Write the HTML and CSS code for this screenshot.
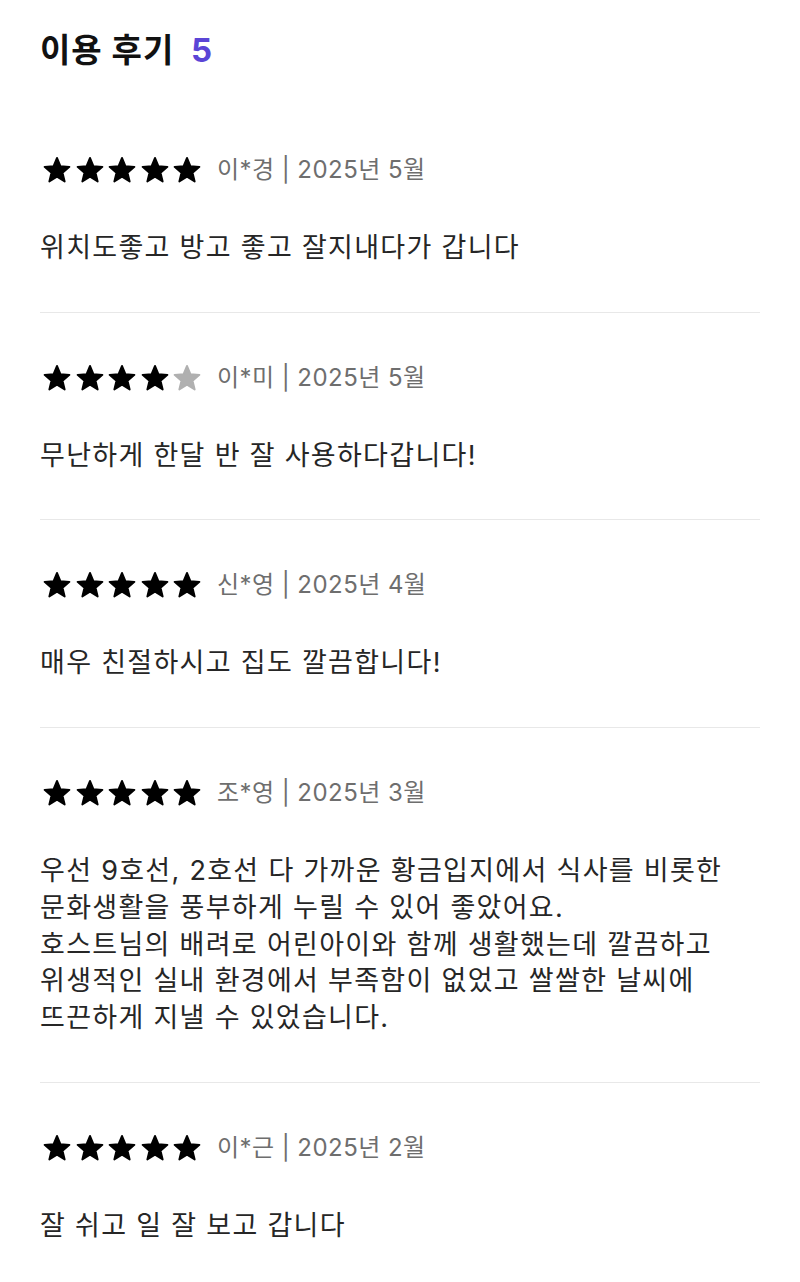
FILE: index.html
```html
<!DOCTYPE html>
<html lang="ko">
<head>
    <meta charset="UTF-8">
    <meta name="viewport" content="width=device-width, initial-scale=1.0">
    <title>이용 후기</title>
    <link rel="stylesheet" href="styles.css">
</head>
<body>

<svg width="0" height="0" class="defs">
    <symbol id="star" viewBox="0 0 24 24">
        <path d="M12 1.6L14.94 8.76L22.65 9.34L16.76 14.35L18.58 21.86L12 17.8L5.42 21.86L7.24 14.35L1.35 9.34L9.06 8.76Z"/>
    </symbol>
</svg>

<main class="reviews">
    <h1 class="reviews-title">이용 후기 <span class="count">5</span></h1>

    <!-- 후기 1 -->
    <div class="review">
        <div class="review-meta">
            <span class="stars">
                <svg class="star"><use href="#star"/></svg>
                <svg class="star"><use href="#star"/></svg>
                <svg class="star"><use href="#star"/></svg>
                <svg class="star"><use href="#star"/></svg>
                <svg class="star"><use href="#star"/></svg>
            </span>
            <span class="author">이*경 | 2025년 5월</span>
        </div>
        <p class="review-text">위치도좋고 방고 좋고 잘지내다가 갑니다</p>
    </div>

    <!-- 후기 2 -->
    <div class="review">
        <div class="review-meta">
            <span class="stars">
                <svg class="star"><use href="#star"/></svg>
                <svg class="star"><use href="#star"/></svg>
                <svg class="star"><use href="#star"/></svg>
                <svg class="star"><use href="#star"/></svg>
                <svg class="star off"><use href="#star"/></svg>
            </span>
            <span class="author">이*미 | 2025년 5월</span>
        </div>
        <p class="review-text">무난하게 한달 반 잘 사용하다갑니다!</p>
    </div>

    <!-- 후기 3 -->
    <div class="review">
        <div class="review-meta">
            <span class="stars">
                <svg class="star"><use href="#star"/></svg>
                <svg class="star"><use href="#star"/></svg>
                <svg class="star"><use href="#star"/></svg>
                <svg class="star"><use href="#star"/></svg>
                <svg class="star"><use href="#star"/></svg>
            </span>
            <span class="author">신*영 | 2025년 4월</span>
        </div>
        <p class="review-text">매우 친절하시고 집도 깔끔합니다!</p>
    </div>

    <!-- 후기 4 -->
    <div class="review">
        <div class="review-meta">
            <span class="stars">
                <svg class="star"><use href="#star"/></svg>
                <svg class="star"><use href="#star"/></svg>
                <svg class="star"><use href="#star"/></svg>
                <svg class="star"><use href="#star"/></svg>
                <svg class="star"><use href="#star"/></svg>
            </span>
            <span class="author">조*영 | 2025년 3월</span>
        </div>
        <p class="review-text">우선 9호선, 2호선 다 가까운 황금입지에서 식사를 비롯한<br>문화생활을 풍부하게 누릴 수 있어 좋았어요.<br>호스트님의 배려로 어린아이와 함께 생활했는데 깔끔하고<br>위생적인 실내 환경에서 부족함이 없었고 쌀쌀한 날씨에<br>뜨끈하게 지낼 수 있었습니다.</p>
    </div>

    <!-- 후기 5 -->
    <div class="review">
        <div class="review-meta">
            <span class="stars">
                <svg class="star"><use href="#star"/></svg>
                <svg class="star"><use href="#star"/></svg>
                <svg class="star"><use href="#star"/></svg>
                <svg class="star"><use href="#star"/></svg>
                <svg class="star"><use href="#star"/></svg>
            </span>
            <span class="author">이*근 | 2025년 2월</span>
        </div>
        <p class="review-text">잘 쉬고 일 잘 보고 갑니다</p>
    </div>
</main>

</body>
</html>
```

FILE: styles.css
```css
/* Reset */
* {
    margin: 0;
    padding: 0;
    box-sizing: border-box;
}

:root {
    --color-text: #262626;
    --color-muted: #6e6e6e;
    --color-accent: #5b45d6;
    --color-line: #e8e8e8;
    --color-star-off: #b0b0b0;
}

body {
    font-family: "Inter", "Noto Sans CJK KR", sans-serif;
    color: var(--color-text);
    background-color: #fff;
}

.defs {
    position: absolute;
}

.reviews {
    padding: 30px 40px;
}

.reviews-title {
    font-size: 33px;
    font-weight: 700;
    line-height: 40px;
    letter-spacing: 1px;
    color: #111;
    margin-bottom: 35px;
}

.reviews-title .count {
    color: var(--color-accent);
    margin-left: 8px;
}

/* Cada avaliação */
.review {
    padding: 49px 0 45px;
    border-bottom: 1px solid var(--color-line);
}

.review:last-child {
    border-bottom: none;
}

.review-meta {
    display: flex;
    align-items: center;
    height: 32px;
    margin-bottom: 44px;
}

.stars {
    display: flex;
    gap: 4.5px;
    margin-left: 3px;
    margin-right: 16px;
}

.star {
    width: 28px;
    height: 28px;
    overflow: visible;
    fill: #000;
    stroke: #000;
    stroke-width: 1.6;
    stroke-linejoin: round;
}

.star.off {
    fill: var(--color-star-off);
    stroke: var(--color-star-off);
}

.author {
    font-size: 24px;
    color: var(--color-muted);
    line-height: 32px;
    letter-spacing: 0.45px;
}

.review-text {
    font-size: 27px;
    line-height: 36.7px;
    letter-spacing: 1.3px;
    color: var(--color-text);
}
```
